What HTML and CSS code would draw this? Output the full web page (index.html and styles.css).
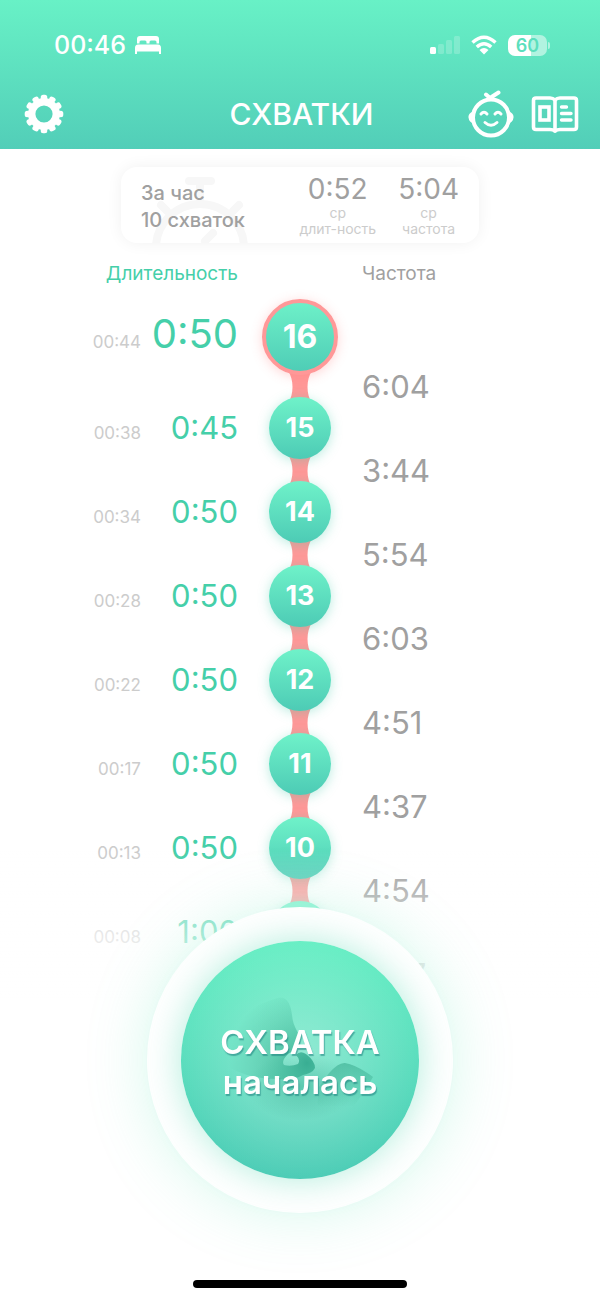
FILE: index.html
```html
<!DOCTYPE html>
<html lang="ru">
<head>
<meta charset="utf-8">
<meta name="viewport" content="width=device-width, initial-scale=1">
<title>Схватки</title>
<link rel="stylesheet" href="styles.css">
</head>
<body>
<svg class="defs" aria-hidden="true">
  <symbol id="link" viewBox="0 0 24 32"><path fill="#ff9898" d="M0 0C6 8 6 24 0 32H24C18 24 18 8 24 0Z"/></symbol>
</svg>
<header class="header">
  <div class="status">
    <div class="status-side">
      <time>00:46</time>
      <svg class="bed" viewBox="0 0 28 20" fill="#fff" aria-hidden="true"><path d="M3 8.500V4Q3 1 6 1H22Q25 1 25 4V8.500H22.500V7Q22.500 5.500 21 5.500H17Q15.500 5.500 15.500 7V8.500H12.500V7Q12.500 5.500 11 5.500H7Q5.500 5.500 5.500 7V8.500ZM1 13Q1 9.500 4 9.500H24Q27 9.500 27 13V19H25V16.500H3V19H1Z"/></svg>
    </div>
    <div class="status-side">
      <svg class="signal" viewBox="0 0 30 20" fill="#fff" aria-hidden="true"><rect x="0" y="12" width="6" height="7" rx="1.500"/><g opacity=".2"><rect x="8" y="9" width="6" height="10" rx="1.500"/><rect x="16" y="5" width="6" height="14" rx="1.500"/><rect x="24" y="1" width="6" height="18" rx="1.500"/></g></svg>
      <svg class="wifi" viewBox="0 0 26 20" fill="none" stroke="#fff" stroke-width="3.400" aria-hidden="true"><path d="M1.500 7.500Q13-3 24.500 7.500M5.800 12Q13 5.500 20.200 12"/><path fill="#fff" stroke="none" d="M8.500 15Q13 11 17.500 15L13 19.500Z"/></svg>
      <span class="battery">60</span>
    </div>
  </div>
  <nav class="nav">
    <button class="icon-button" aria-label="Настройки">
      <svg class="gear" viewBox="-20 -20 40 40" aria-hidden="true"><circle r="12.300" fill="none" stroke="#fff" stroke-width="7.400"/><g stroke="#fff" stroke-width="5" stroke-linejoin="round" stroke-linecap="round"><path id="teeth" d="M-.8-16.800H.8M-.8 16.800H.8M-16.800-.8V.8M16.800-.8V.8"/><use href="#teeth" transform="rotate(30)"/><use href="#teeth" transform="rotate(60)"/></g></svg>
    </button>
    <h1 class="title">СХВАТКИ</h1>
    <div class="nav-actions">
      <button class="icon-button" aria-label="Ребёнок">
        <svg class="baby" viewBox="0 0 46 48" fill="none" stroke="#fff" stroke-linecap="round" aria-hidden="true"><circle cx="23" cy="27.500" r="18" stroke-width="4"/><path fill="#fff" stroke="none" d="M5 21.500Q0 23.500 .500 27.500Q1 32.500 6 33.500ZM41 21.500Q46 23.500 45.500 27.500Q45 32.500 40 33.500Z"/><path stroke-width="4" d="M22 8L30.500 2.500M22 8L18 4.500"/><path stroke-width="3" d="M13 24Q16 20.500 19 24M27 24Q30 20.500 33 24M17 32.500Q23 38 29 32.500"/></svg>
      </button>
      <button class="icon-button" aria-label="Журнал">
        <svg class="book" viewBox="0 0 48 40" fill="none" stroke="#fff" stroke-linejoin="round" stroke-linecap="round" aria-hidden="true"><path stroke-width="3.600" d="M24 6Q22 4 19 4H5Q2.500 4 2.500 6.500V33Q2.500 35.500 5 35.500H19Q22 35.500 24 37Q26 35.500 29 35.500H43Q45.500 35.500 45.500 33V6.500Q45.500 4 43 4H29Q26 4 24 6Z"/><path stroke-width="3.600" d="M24 6V37"/><rect x="9" y="13" width="9" height="13" stroke-width="3.600" stroke-linejoin="miter"/><path stroke-width="3.400" d="M30.500 13H35.500M30.500 19.500H40M30.500 26H40"/></svg>
      </button>
    </div>
  </nav>
</header>

<main class="main">
  <section class="summary" aria-label="Сводка">
    <svg class="stopwatch" viewBox="0 0 100 68" fill="none" stroke="#f7f7f7" stroke-width="8" stroke-linecap="round" aria-hidden="true"><path d="M38 6H60M49 8V28M10 30L16 36M88 30L82 36M62 58L54 66"/><circle cx="49" cy="73" r="44"/></svg>
    <p class="summary-text">За час<br>10 схваток</p>
    <dl class="stats">
      <div class="stat"><dd>0:52</dd><dt>ср<br>длит-ность</dt></div>
      <div class="stat"><dd>5:04</dd><dt>ср<br>частота</dt></div>
    </dl>
  </section>

  <div class="columns heading">
    <h2 class="heading-duration">Длительность</h2>
    <span></span>
    <h2 class="heading-interval">Частота</h2>
  </div>

  <div class="columns timeline">
    <ol class="durations">
      <li class="row latest"><time>00:44</time><b>0:50</b></li>
      <li class="row"><time>00:38</time><b>0:45</b></li>
      <li class="row"><time>00:34</time><b>0:50</b></li>
      <li class="row"><time>00:28</time><b>0:50</b></li>
      <li class="row"><time>00:22</time><b>0:50</b></li>
      <li class="row"><time>00:17</time><b>0:50</b></li>
      <li class="row"><time>00:13</time><b>0:50</b></li>
      <li class="row"><time>00:08</time><b>1:00</b></li>
    </ol>
    <ol class="nodes">
      <li class="row latest"><span class="node">16</span><svg class="link" aria-hidden="true"><use href="#link"/></svg></li>
      <li class="row"><span class="node">15</span><svg class="link" aria-hidden="true"><use href="#link"/></svg></li>
      <li class="row"><span class="node">14</span><svg class="link" aria-hidden="true"><use href="#link"/></svg></li>
      <li class="row"><span class="node">13</span><svg class="link" aria-hidden="true"><use href="#link"/></svg></li>
      <li class="row"><span class="node">12</span><svg class="link" aria-hidden="true"><use href="#link"/></svg></li>
      <li class="row"><span class="node">11</span><svg class="link" aria-hidden="true"><use href="#link"/></svg></li>
      <li class="row"><span class="node">10</span><svg class="link" aria-hidden="true"><use href="#link"/></svg></li>
      <li class="row"><span class="node">9</span></li>
    </ol>
    <ol class="intervals">
      <li class="row">6:04</li>
      <li class="row">3:44</li>
      <li class="row">5:54</li>
      <li class="row">6:03</li>
      <li class="row">4:51</li>
      <li class="row">4:37</li>
      <li class="row">4:54</li>
      <li class="row">5:07</li>
    </ol>
  </div>
</main>

<footer class="dock">
  <div class="halo">
    <button class="start">
      <svg class="baby-art" viewBox="0 0 238 238" aria-hidden="true">
        <defs>
          <radialGradient id="shade" gradientUnits="userSpaceOnUse" cx="126" cy="122" r="78"><stop offset="0" stop-color="#35ab90" stop-opacity=".95"/><stop offset=".4" stop-color="#3fb898" stop-opacity=".6"/><stop offset="1" stop-color="#45bd9d" stop-opacity="0"/></radialGradient>
          <linearGradient id="hump" x1="0" y1="0" x2="0" y2="1"><stop offset="0" stop-color="#3fb093" stop-opacity=".65"/><stop offset="1" stop-color="#3fb093" stop-opacity="0"/></linearGradient>
          <radialGradient id="under"><stop offset="0" stop-color="#3bb296" stop-opacity=".55"/><stop offset="1" stop-color="#3bb296" stop-opacity="0"/></radialGradient>
        </defs>
        <ellipse cx="120" cy="146" rx="54" ry="34" fill="url(#under)"/>
        <path fill="url(#shade)" d="M50 90C62 66 84 62 96 57C106 54 110 64 111 74C112 88 120 92 119 102Q116 108 107 113Q100 120 103 124Q110 126 117 123Q120 119 115 114Q119 109 125 113Q134 120 134 127Q132 132 122 134Q112 140 96 138Q66 138 44 124Z"/>
        <path fill="url(#hump)" d="M138 146Q154 121 164 122Q176 124 192 136Q184 150 172 166H136Z"/>
      </svg>
      <span class="start-label">СХВАТКА<br>началась</span>
    </button>
  </div>
  <div class="home-indicator"></div>
</footer>
</body>
</html>
```
FILE: styles.css
```css
* {
  box-sizing: border-box;
  margin: 0;
  padding: 0;
}

body {
  min-height: 100vh;
  background: #fff;
  color: #a0a0a0;
  font-family: Inter, "Noto Sans", sans-serif;
}

button {
  border: 0;
  background: none;
  color: inherit;
  font: inherit;
  cursor: pointer;
}

ol {
  list-style: none;
}

svg {
  display: block;
}

.defs {
  position: absolute;
  width: 0;
  height: 0;
}

.header {
  padding: 30px 21px 11px 24px;
  background: linear-gradient(#68f1c6, #52ceb8);
  color: #fff;
}

.status {
  display: flex;
  justify-content: space-between;
  padding: 0 32px 0 30px;
}

.status-side {
  display: flex;
  align-items: center;
  gap: 8px;
  height: 30px;
  font-size: 25px;
  font-weight: 500;
}

.bed {
  width: 28px;
  height: 20px;
}

.signal {
  width: 30px;
  height: 20px;
  margin-right: 3px;
}

.wifi {
  width: 26px;
  height: 20px;
  margin-right: 3px;
}

.battery {
  position: relative;
  width: 39px;
  border-radius: 7px;
  background: linear-gradient(90deg, #fff 60%, #b1f3e0 60%);
  color: #5cdfbd;
  font-size: 18px;
  font-weight: 600;
  line-height: 21px;
  text-align: center;
}

.battery::after {
  content: "";
  position: absolute;
  top: 7px;
  right: -3px;
  width: 2px;
  height: 7px;
  border-radius: 0 2px 2px 0;
  background: #b1f3e0;
}

.nav {
  display: grid;
  grid-template-columns: 1fr auto 1fr;
  align-items: center;
  height: 48px;
  margin-top: 30px;
}

.title {
  font-size: 30px;
  font-weight: 500;
}

.nav-actions {
  display: flex;
  align-items: center;
  justify-content: flex-end;
  gap: 17px;
}

.icon-button {
  justify-self: start;
}

.gear {
  width: 40px;
  height: 40px;
}

.baby {
  width: 46px;
  height: 48px;
}

.book {
  width: 48px;
  height: 40px;
}

.main {
  padding: 18px 16px 0;
}

.summary {
  position: relative;
  display: flex;
  align-items: center;
  justify-content: space-between;
  max-width: 358px;
  margin: 0 auto;
  padding: 6px 20px;
  overflow: hidden;
  border-radius: 16px;
  box-shadow: 0 0 16px rgb(0 0 0 / 6%);
}

.stopwatch {
  position: absolute;
  bottom: 0;
  left: 30px;
  width: 100px;
  height: 68px;
}

.summary-text {
  position: relative;
  padding-top: 3px;
  font-size: 20px;
  font-weight: 500;
  line-height: 27px;
}

.stats {
  display: flex;
  gap: 22px;
  text-align: center;
}

.stat dd {
  font-size: 28px;
  line-height: 32px;
}

.stat dt {
  color: #ccc;
  font-size: 14px;
  line-height: 16px;
}

.columns {
  display: grid;
  grid-template-columns: 1fr 76px 1fr;
  column-gap: 24px;
}

.heading {
  margin-top: 18px;
}

.heading h2 {
  font-size: 19px;
  font-weight: 400;
  line-height: 26px;
}

.heading-duration {
  color: #45cfa9;
  text-align: right;
}

.timeline {
  padding-top: 8px;
}

.row {
  position: relative;
  display: flex;
  align-items: center;
  height: 84px;
}

.latest {
  margin-bottom: 7px;
}

.durations .row {
  align-items: baseline;
  justify-content: flex-end;
  line-height: 84px;
}

.durations time {
  color: #ccc;
  font-size: 17px;
}

.durations b {
  width: 97px;
  color: #45cfa9;
  font-size: 31px;
  font-weight: 400;
  text-align: right;
}

.durations .latest {
  line-height: 78px;
}

.durations .latest b {
  font-size: 40px;
}

.nodes .row {
  justify-content: center;
}

.node {
  z-index: 1;
  width: 62px;
  border-radius: 50%;
  background: linear-gradient(#6ff2c9, #4dcbb5);
  box-shadow: 0 2px 12px rgb(60 200 165 / 35%);
  color: #fff;
  font-size: 27px;
  font-weight: 700;
  line-height: 62px;
  text-align: center;
}

.latest .node {
  width: 76px;
  border: 4px solid #ff9898;
  background-origin: border-box;
  box-shadow: 0 2px 12px rgb(255 120 120 / 30%);
  font-size: 32px;
  line-height: 68px;
}

.link {
  position: absolute;
  top: 69px;
  width: 24px;
  height: 32px;
}

.latest .link {
  top: 76px;
}

.intervals {
  padding-top: 49px;
  font-size: 31px;
}

.dock {
  position: fixed;
  z-index: 2;
  right: 0;
  bottom: 0;
  left: 0;
  display: flex;
  flex-direction: column;
  align-items: center;
  padding: 57px 0 12px;
  background: linear-gradient(rgb(255 255 255 / 0%), #fff 150px);
}

.halo {
  padding: 34px;
  border-radius: 50%;
  background: #fff;
  box-shadow: 0 0 60px rgb(90 230 185 / 25%);
}

.start {
  position: relative;
  display: grid;
  place-items: center;
  width: 238px;
  height: 238px;
  border-radius: 50%;
  background:
    radial-gradient(circle closest-side, rgb(255 255 255 / 34%), rgb(255 255 255 / 0%)),
    linear-gradient(#69efc5, #4dccb6);
  box-shadow: 0 0 36px rgb(80 215 175 / 45%);
}

.baby-art {
  position: absolute;
  inset: 0;
}

.start-label {
  position: relative;
  padding-top: 4px;
  color: #fff;
  font-size: 33px;
  font-weight: 600;
  line-height: 40px;
  text-shadow: 1px 2px 1px rgb(30 125 125 / 55%);
}

.home-indicator {
  width: 214px;
  height: 8px;
  margin-top: 67px;
  border-radius: 4px;
  background: #000;
}
```
